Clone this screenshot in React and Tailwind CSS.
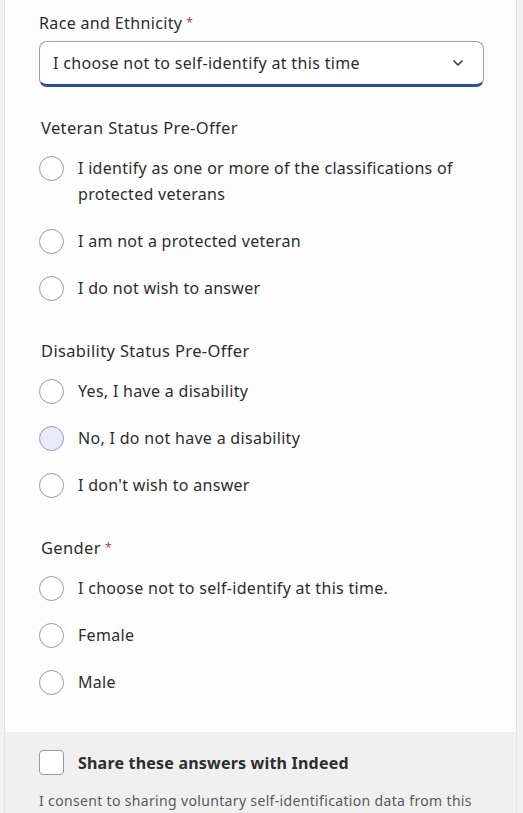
import React from 'react';
import { ChevronDown } from 'lucide-react';

const font = { fontFamily: '"Noto Sans", Arial, sans-serif' };

const Radio = ({ label, active }) => (
  <label className="flex items-start gap-[14px] cursor-pointer">
    <span
      className={`mt-[1px] w-[25px] h-[25px] shrink-0 rounded-full border-[1.5px] ${
        active ? 'border-[#8e99cf] bg-[#e9ecf8]' : 'border-[#9a9a9a] bg-white'
      }`}
    />
    <span className="text-[16px] leading-[26px] tracking-[0.3px] text-[#2d2d2d]">{label}</span>
  </label>
);

const Group = ({ title, required, options, active }) => (
  <div>
    <div className="text-[16.5px] leading-[24px] tracking-[0.35px] text-[#2d2d2d] ml-[2px]">
      {title}
      {required && <span className="text-[#c7364f] ml-1 text-[12px] align-top">*</span>}
    </div>
    <div className="mt-[15px] flex flex-col gap-[21px]">
      {options.map((o) => (
        <Radio key={o} label={o} active={o === active} />
      ))}
    </div>
  </div>
);

export default function App() {
  return (
    <div className="min-h-[813px] bg-[#f2f2f2]" style={font}>
      <div className="ml-[4px] w-[513px] bg-[#fdfdfd] border-x border-[#e3e3e3]">
        <div className="pl-[34px] pr-[30px] pt-[11px] pb-[37px]">
          <div className="text-[16px] leading-[24px] tracking-[0.35px] text-[#2d2d2d]">
            Race and Ethnicity
            <span className="text-[#c7364f] ml-1 text-[12px] align-top">*</span>
          </div>
          <div className="mt-[6px] w-[445px] h-[46px] rounded-[8px] border border-[#8f9ad2] border-b-[3px] border-b-[#2b4fa0] bg-white flex items-center justify-between pl-[13px] pr-[17px]">
            <span className="text-[16px] tracking-[0.33px] text-[#2d2d2d]">I choose not to self-identify at this time</span>
            <ChevronDown size={16} strokeWidth={2.5} className="text-[#3a3a3a]" />
          </div>

          <div className="mt-[29px]">
            <Group
              title="Veteran Status Pre-Offer"
              options={[
                'I identify as one or more of the classifications of protected veterans',
                'I am not a protected veteran',
                'I do not wish to answer',
              ]}
            />
          </div>
          <div className="mt-[38px]">
            <Group
              title="Disability Status Pre-Offer"
              options={['Yes, I have a disability', 'No, I do not have a disability', "I don't wish to answer"]}
              active="No, I do not have a disability"
            />
          </div>
          <div className="mt-[38px]">
            <Group
              title="Gender"
              required
              options={['I choose not to self-identify at this time.', 'Female', 'Male']}
            />
          </div>
        </div>
        <div className="bg-[#f0f0f0] pl-[34px] pr-[30px] pt-[18px] pb-[10px]">
          <label className="flex items-center gap-[14px]">
            <span className="w-[25px] h-[25px] rounded-[4px] border-[1.5px] border-[#9a9a9a] bg-white" />
            <span className="text-[16px] font-bold tracking-[0.2px] text-[#2d2d2d]">Share these answers with Indeed</span>
          </label>
          <p className="mt-[16px] text-[14px] leading-[20px] tracking-[0.34px] text-[#595959]">
            I consent to sharing voluntary self-identification data from this application with Indeed.
          </p>
        </div>
      </div>
    </div>
  );
}
